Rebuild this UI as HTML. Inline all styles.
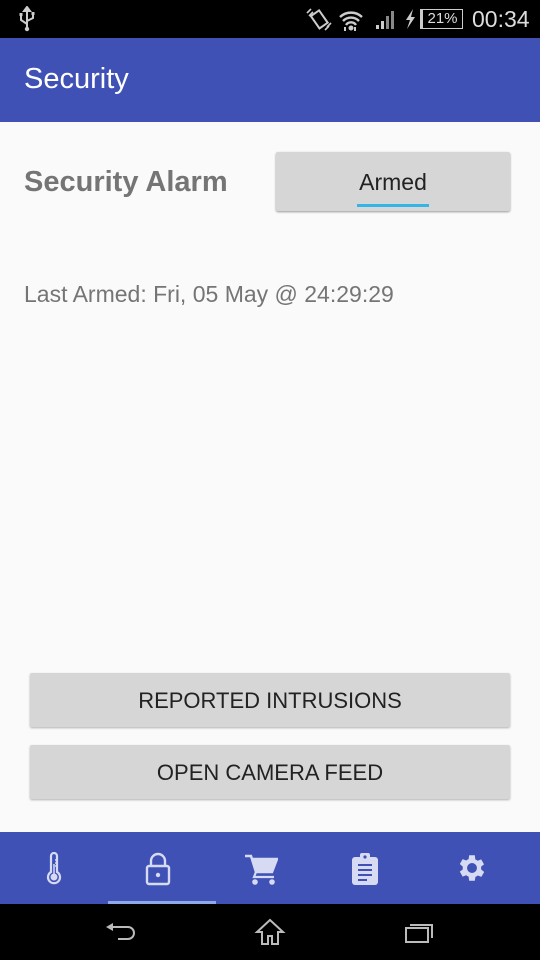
<!DOCTYPE html>
<html><head><meta charset="utf-8"><style>
*{margin:0;padding:0;box-sizing:border-box}
body{width:540px;height:960px;background:#fafafa;font-family:"Liberation Sans",sans-serif;position:relative;overflow:hidden}
.sb{position:absolute;top:0;left:0;width:540px;height:38px;background:#000;color:#ddd}
.ab{position:absolute;top:38px;left:0;width:540px;height:84px;background:#3f51b5;color:#fff;font-size:29px;padding:25px 0 0 24px}
.t1{position:absolute;left:24px;top:166px;font-size:29px;font-weight:bold;color:#757575}
.arm{position:absolute;left:276px;top:152px;width:234px;height:59px;background:#d6d6d6;border-radius:2px;box-shadow:0 1px 2px rgba(0,0,0,.4);text-align:center;font-size:23px;color:#222;padding-top:17px}
.arm i{position:absolute;left:81px;top:52px;width:72px;height:3px;background:#33b5e5}
.la{position:absolute;left:24px;top:281px;font-size:23px;color:#757575}
.btn{position:absolute;left:30px;width:480px;height:54px;background:#d6d6d6;box-shadow:0 1px 2px rgba(0,0,0,.3);text-align:center;font-size:22px;color:#222;padding-top:15px;border-radius:2px}
.bn{position:absolute;top:832px;left:0;width:540px;height:72px;background:#3f51b5}
.ind{position:absolute;left:108px;top:69px;width:108px;height:3px;background:#8fa8e8}
.nb{position:absolute;top:904px;left:0;width:540px;height:56px;background:#000}
svg{position:absolute}
</style></head><body>
<div class="sb">
<svg style="left:18px;top:6px" width="18" height="26" viewBox="0 0 18 26"><path d="M9 1v22M9 1l-3 4h6zM3 9v5l6 4M15 8v4l-6 3" stroke="#ccc" stroke-width="2" fill="none"/><circle cx="9" cy="23" r="2.2" fill="#ccc"/><rect x="1.5" y="7" width="3" height="3" fill="#ccc"/><rect x="13.5" y="6" width="3" height="3" fill="#ccc"/></svg>
<svg style="left:305px;top:7px" width="28" height="24" viewBox="0 0 28 24"><rect x="9" y="5" width="10" height="15" transform="rotate(-35 14 12)" stroke="#ccc" stroke-width="2" fill="none"/><path d="M2 6l4-4M4 9l4-4M22 20l4-4M20 23l4-4" stroke="#ccc" stroke-width="1.6"/></svg>
<svg style="left:338px;top:8px" width="26" height="24" viewBox="0 0 26 24"><path d="M2 9a16 16 0 0 1 22 0M5 13a11 11 0 0 1 16 0M8 17a6 6 0 0 1 10 0" stroke="#ccc" stroke-width="2.4" fill="none"/><circle cx="13" cy="20" r="2.5" fill="#ccc"/><path d="M7 23v-4M17 19v4" stroke="#ccc" stroke-width="2"/></svg>
<svg style="left:374px;top:10px" width="24" height="20" viewBox="0 0 24 20"><rect x="2" y="15" width="3" height="4" fill="#ccc"/><rect x="7" y="11" width="3" height="8" fill="#ccc"/><rect x="12" y="6" width="3" height="13" fill="#888"/><rect x="17" y="1" width="3" height="18" fill="#888"/></svg>
<svg style="left:403px;top:8px" width="14" height="22" viewBox="0 0 14 22"><path d="M10 1L3 12h4l-3 9 8-12H8z" fill="#ccc"/></svg>
<div style="position:absolute;left:420px;top:9px;width:43px;height:20px;border:1.5px solid #ccc;border-left-width:3px;font-size:15px;text-align:center;line-height:17px;color:#ddd">21%</div>
<div style="position:absolute;left:472px;top:6px;font-size:23px;color:#ddd">00:34</div>
</div>
<div class="ab">Security</div>
<div class="t1">Security Alarm</div>
<div class="arm">Armed<i></i></div>
<div class="la">Last Armed: Fri, 05 May @ 24:29:29</div>
<div class="btn" style="top:673px">REPORTED INTRUSIONS</div>
<div class="btn" style="top:745px">OPEN CAMERA FEED</div>
<div class="bn">
<svg style="left:44px;top:20px" width="20" height="34" viewBox="0 0 20 34"><path d="M7 4a3 3 0 0 1 6 0v16a6 6 0 1 1-6 0z" stroke="#d6dbf3" stroke-width="2.2" fill="none"/><circle cx="10" cy="25" r="3.5" fill="#d6dbf3"/><path d="M10 12v12M11 8h2M11 11h2M11 14h2" stroke="#d6dbf3" stroke-width="1.5"/></svg>
<svg style="left:144px;top:20px" width="28" height="34" viewBox="0 0 28 34"><path d="M7 14V9a7 7 0 0 1 14 0v5" stroke="#d6dbf3" stroke-width="2.4" fill="none"/><rect x="3" y="14" width="22" height="18" rx="2" stroke="#d6dbf3" stroke-width="2.4" fill="none"/><circle cx="14" cy="23" r="2.2" fill="#d6dbf3"/></svg>
<svg style="left:244px;top:22px" width="34" height="32" viewBox="0 0 34 32"><path d="M1 2h6l5 16h16l5-13H9" fill="none" stroke="#d6dbf3" stroke-width="2.5"/><path d="M9 5h24l-5 13H12z" fill="#d6dbf3"/><path d="M12 18l-2 5h20" stroke="#d6dbf3" stroke-width="2.2" fill="none"/><circle cx="11" cy="28" r="2.8" fill="#d6dbf3"/><circle cx="28" cy="28" r="2.8" fill="#d6dbf3"/></svg>
<svg style="left:351px;top:20px" width="28" height="34" viewBox="0 0 28 34"><rect x="1" y="5" width="26" height="28" rx="3" fill="#d6dbf3"/><rect x="9" y="1" width="10" height="7" rx="2" fill="#d6dbf3"/><circle cx="14" cy="5" r="1.6" fill="#3f51b5"/><path d="M7 13h14M7 18h14M7 23h14M7 28h9" stroke="#3f51b5" stroke-width="2"/></svg>
<svg style="left:455px;top:19px" width="34" height="34" viewBox="0 0 24 24"><path fill="#d6dbf3" d="M19.4 13a7.5 7.5 0 0 0 0-2l2.1-1.6-2-3.5-2.5 1a7 7 0 0 0-1.7-1L15 3h-4l-.4 2.7a7 7 0 0 0-1.7 1l-2.5-1-2 3.5L6.5 11a7.5 7.5 0 0 0 0 2l-2.1 1.6 2 3.5 2.5-1a7 7 0 0 0 1.7 1L11 21h4l.4-2.7a7 7 0 0 0 1.7-1l2.5 1 2-3.5zM13 15.5a3.5 3.5 0 1 1 0-7 3.5 3.5 0 0 1 0 7z" transform="translate(-1 0)"/></svg>
<div class="ind"></div>
</div>
<div class="nb">
<svg style="left:104px;top:18px" width="32" height="24" viewBox="0 0 32 24"><path d="M4 5h20a6 6 0 0 1 0 12H14" stroke="#bbb" stroke-width="2" fill="none"/><path d="M2 5l7-4v8z" fill="#bbb"/></svg>
<svg style="left:254px;top:14px" width="32" height="28" viewBox="0 0 32 28"><path d="M16 2L3 14h5v12h6v-8h4v8h6V14h5z" stroke="#bbb" stroke-width="2" fill="none"/></svg>
<svg style="left:404px;top:18px" width="32" height="22" viewBox="0 0 32 22"><rect x="2" y="6" width="22" height="14" stroke="#bbb" stroke-width="2" fill="none"/><path d="M6 3h22v13" stroke="#bbb" stroke-width="2" fill="none"/></svg>
</div>
</body></html>
